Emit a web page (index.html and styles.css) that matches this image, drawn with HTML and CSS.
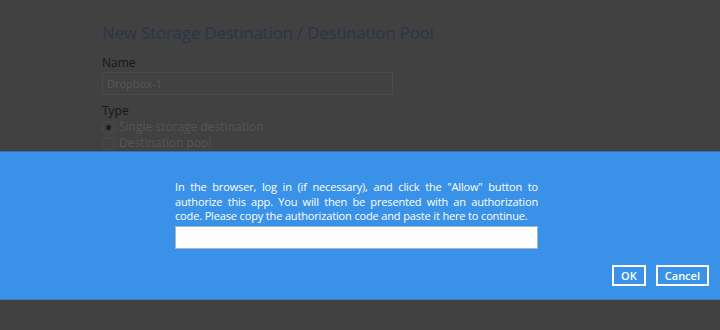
FILE: index.html
```html
<!DOCTYPE html>
<html lang="en">
<head>
  <meta charset="UTF-8">
  <title>New Storage Destination</title>
  <link rel="stylesheet" href="styles.css">
</head>
<body>
  <div class="page">
    <h1 class="title">New Storage Destination / Destination Pool</h1>
    <label class="field-label">Name</label>
    <input class="name-input" type="text" value="Dropbox-1">
    <label class="field-label type-label">Type</label>
    <div class="radio-row"><span class="radio checked"></span>Single storage destination</div>
    <div class="radio-row"><span class="radio"></span>Destination pool</div>
  </div>

  <div class="dialog">
    <div class="dialog-body">
      <p class="dialog-text">In the browser, log in (if necessary), and click the "Allow" button to authorize this app. You will then be presented with an authorization code. Please copy the authorization code and paste it here to continue.</p>
      <input class="code-input" type="text">
    </div>
    <div class="dialog-actions">
      <button class="btn">OK</button>
      <button class="btn">Cancel</button>
    </div>
  </div>
</body>
</html>
```

FILE: styles.css
```css
body {
  margin: 0;
  background-color: #414141;
  font-family: "Open Sans", sans-serif;
  height: 330px;
  overflow: hidden;
}
.page {
  padding: 21px 0 0 102px;
}
.title {
  margin: 0;
  font-size: 17px;
  font-weight: 400;
  letter-spacing: -0.25px;
  color: #2b3548;
  line-height: 24px;
}
.field-label {
  display: block;
  margin-top: 10px;
  font-size: 12px;
  color: #161616;
  line-height: 16px;
}
.name-input {
  box-sizing: border-box;
  width: 291px;
  height: 23px;
  margin-top: 1px;
  padding: 0 4px;
  font-family: "Open Sans", sans-serif;
  font-size: 11px;
  color: #575757;
  background: #414141;
  border: 1px solid #4a4a4a;
}
.type-label {
  margin-top: 8px;
}
.radio-row {
  display: flex;
  align-items: center;
  gap: 4px;
  font-size: 12px;
  color: #555;
  line-height: 16px;
}
.radio {
  width: 13px;
  height: 13px;
  border-radius: 50%;
  border: 1px solid #4e4e4e;
  box-sizing: border-box;
  position: relative;
}
.radio.checked::after {
  content: "";
  position: absolute;
  left: 3px;
  top: 3px;
  width: 5px;
  height: 5px;
  border-radius: 50%;
  background: #1e1e1e;
}
.dialog {
  position: absolute;
  left: 0;
  top: 151px;
  width: 720px;
  height: 149px;
  box-sizing: border-box;
  background-color: #3a92e8;
  border-top: 1px solid #2f72b8;
  border-bottom: 1px solid #4677a8;
}
.dialog-body {
  width: 363px;
  margin: 28px 0 0 175px;
}
.dialog-text {
  margin: 0;
  font-size: 11px;
  letter-spacing: -0.15px;
  line-height: 14.5px;
  color: #fff;
  text-align: justify;
}
.code-input {
  display: block;
  box-sizing: border-box;
  width: 363px;
  height: 23px;
  margin-top: 2px;
  background: #fff;
  border: 1px solid #a9b4c2;
}
.dialog-actions {
  display: flex;
  justify-content: flex-end;
  gap: 10px;
  padding: 16px 11px 0 0;
}
.btn {
  height: 21px;
  padding: 0 7px;
  font-family: "Open Sans", sans-serif;
  font-size: 11px;
  font-weight: 600;
  color: #fff;
  background: transparent;
  border: 2px solid #fff;
  cursor: pointer;
}
```
